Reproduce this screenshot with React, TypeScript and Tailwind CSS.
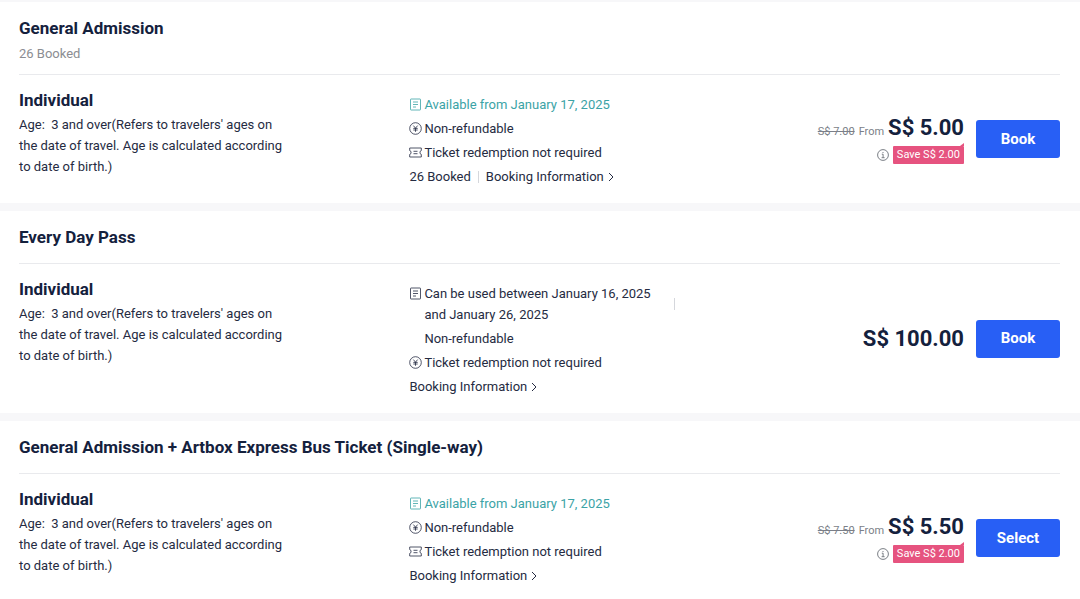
import type { ReactNode } from "react";

type Info = { icon?: "doc" | "yen" | "ticket"; t: string; teal?: boolean; sep?: boolean };

type Ticket = {
  title: string;
  booked?: string;
  info: Info[];
  infoBooked?: string;
  old?: string;
  price: string;
  save?: string;
  cta: string;
};

const TICKETS: Ticket[] = [
  {
    title: "General Admission",
    booked: "26 Booked",
    info: [
      { icon: "doc", t: "Available from January 17, 2025", teal: true },
      { icon: "yen", t: "Non-refundable" },
      { icon: "ticket", t: "Ticket redemption not required" },
    ],
    infoBooked: "26 Booked",
    old: "S$ 7.00",
    price: "S$ 5.00",
    save: "Save S$ 2.00",
    cta: "Book",
  },
  {
    title: "Every Day Pass",
    info: [
      { icon: "doc", t: "Can be used between January 16, 2025 and January 26, 2025", sep: true },
      { t: "Non-refundable" },
      { icon: "yen", t: "Ticket redemption not required" },
    ],
    price: "S$ 100.00",
    cta: "Book",
  },
  {
    title: "General Admission + Artbox Express Bus Ticket (Single-way)",
    info: [
      { icon: "doc", t: "Available from January 17, 2025", teal: true },
      { icon: "yen", t: "Non-refundable" },
      { icon: "ticket", t: "Ticket redemption not required" },
    ],
    old: "S$ 7.50",
    price: "S$ 5.50",
    save: "Save S$ 2.00",
    cta: "Select",
  },
];

const ICONS: Record<string, ReactNode> = {
  doc: (
    <>
      <rect x="1.5" y="1" width="10" height="11" rx="0.5" />
      <path d="M4 4h5M4 6.5h5M4 9h3" />
    </>
  ),
  yen: (
    <>
      <circle cx="6.5" cy="6.5" r="5.8" />
      <path d="M4.4 3.6l2.1 2.6 2.1-2.6M6.5 6.2v3.6M4.3 6.4h4.4M4.3 8h4.4" />
    </>
  ),
  ticket: (
    <>
      <path d="M.7 2h11.6v2.6l-1.3.9v2l1.3.9V11H.7V8.4l1.3-.9v-2L.7 4.6z" />
      <path d="M4.5 5.3h4M4.5 7.7h4" />
    </>
  ),
};

function Icon({ name }: { name?: string }) {
  return (
    <svg
      viewBox="0 0 13 13"
      className="mt-1 h-[13px] w-[13px] shrink-0"
      fill="none"
      stroke="currentColor"
      strokeWidth="0.8"
      aria-hidden="true"
    >
      {name && ICONS[name]}
    </svg>
  );
}

function Price({ d }: { d: Ticket }) {
  return (
    <div className="flex flex-col items-end gap-1">
      <div className="flex items-baseline gap-1 text-[11px] leading-none text-[#7b7f88]">
        {d.old && (
          <>
            <del>{d.old}</del>
            <span>From</span>
          </>
        )}
        <strong className="text-[22px] leading-7 font-bold text-[#14213d]">{d.price}</strong>
      </div>
      {d.save && (
        <div className="flex items-center gap-1">
          <svg viewBox="0 0 12 12" className="h-3 w-3" fill="none" stroke="#6b7078" strokeWidth="0.9" aria-hidden="true">
            <circle cx="6" cy="6" r="5.4" />
            <path d="M4.8 5.2h1.3v3.3M4.6 8.7h3M6 3v1" />
          </svg>
          <span className="relative rounded-[1px] bg-[#e6537f] px-1 text-[11px] leading-[18px] text-white">
            {d.save}
            <svg viewBox="0 0 4 3" className="absolute -top-[3px] right-0 h-[3px] w-1" fill="#e6537f" aria-hidden="true">
              <path d="M4 0v3H0z" />
            </svg>
          </span>
        </div>
      )}
    </div>
  );
}

function TicketCard({ d }: { d: Ticket }) {
  return (
    <section className="bg-white pr-5 pl-[19px]">
      <header className={d.booked ? "border-b border-[#e9eaed] pt-3 pb-2" : "border-b border-[#e9eaed] py-3"}>
        <h2 className="text-[17px] leading-7 font-bold">{d.title}</h2>
        {d.booked && <p className="text-[13px] leading-6 text-[#8b8d92]">{d.booked}</p>}
      </header>

      <div className="flex items-center">
        <div className="w-3/8 shrink-0 self-start pt-[11px]">
          <h3 className="text-[17px] leading-7 font-bold">Individual</h3>
          <p className="max-w-[270px] text-[13px] leading-[21px] whitespace-pre-wrap text-[#252b42]">
            {"Age:  3 and over(Refers to travelers' ages on the date of travel. Age is calculated according to date of birth.)"}
          </p>
        </div>

        <div className="flex flex-1 flex-col gap-[3px] pt-[19px] pb-4 text-[13px] leading-[21px] text-[#252b42]">
          {d.info.map((x, i) => (
            <div key={i} className={x.teal ? "flex gap-0.5 text-[#3ba3a6]" : "flex gap-0.5"}>
              <Icon name={x.icon} />
              <span className="max-w-[248px]">{x.t}</span>
              {x.sep && <span className="h-3 w-px self-center bg-[#d5d7dc]" />}
            </div>
          ))}
          <div className="flex items-center">
            {d.infoBooked && (
              <>
                <span>{d.infoBooked}</span>
                <span className="mx-[7px] h-3 w-px bg-[#d5d7dc]" />
              </>
            )}
            <a href="#booking" className="flex items-center gap-1">
              Booking Information
              <svg viewBox="0 0 6 10" className="h-[10px] w-[6px]" fill="none" stroke="currentColor" aria-hidden="true">
                <path d="M1 1l4 4-4 4" />
              </svg>
            </a>
          </div>
        </div>

        <div className="flex items-center gap-3">
          <Price d={d} />
          <button type="button" className="h-[38px] w-[84px] rounded-[3px] bg-[#285ff5] text-[15px] font-bold text-white">
            {d.cta}
          </button>
        </div>
      </div>
    </section>
  );
}

export default function App() {
  return (
    <main className="flex flex-col gap-2 bg-[#f7f7f9] pt-0.5 font-[Roboto,sans-serif] text-[#14213d]">
      {TICKETS.map((d) => (
        <TicketCard key={d.title} d={d} />
      ))}
    </main>
  );
}
